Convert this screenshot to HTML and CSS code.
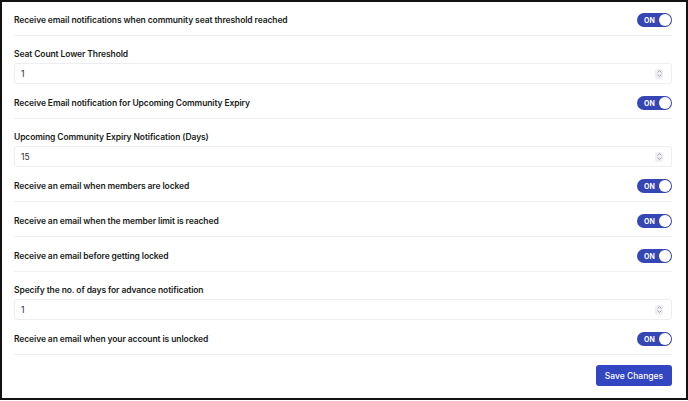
FILE: index.html
```html
<!DOCTYPE html>
<html>
<head>
<meta charset="utf-8">
<link rel="stylesheet" href="styles.css">
</head>
<body>
<div class="frame">
  <div class="settings">
    <div class="toggle-row first">
      <span class="label">Receive email notifications when community seat threshold reached</span>
      <span class="toggle"><span class="on">ON</span><span class="knob"></span></span>
    </div>
    <div class="field">
      <div class="label">Seat Count Lower Threshold</div>
      <div class="input"><span>1</span><span class="spin"><svg width="7" height="9" viewBox="0 0 7 9"><path d="M1.5 3.5 L3.5 1.5 L5.5 3.5 M1.5 5.5 L3.5 7.5 L5.5 5.5" fill="none" stroke="#8a8f98" stroke-width="0.8"/></svg></span></div>
    </div>
    <div class="toggle-row">
      <span class="label">Receive Email notification for Upcoming Community Expiry</span>
      <span class="toggle"><span class="on">ON</span><span class="knob"></span></span>
    </div>
    <div class="field">
      <div class="label">Upcoming Community Expiry Notification (Days)</div>
      <div class="input"><span>15</span><span class="spin"><svg width="7" height="9" viewBox="0 0 7 9"><path d="M1.5 3.5 L3.5 1.5 L5.5 3.5 M1.5 5.5 L3.5 7.5 L5.5 5.5" fill="none" stroke="#8a8f98" stroke-width="0.8"/></svg></span></div>
    </div>
    <div class="toggle-row">
      <span class="label">Receive an email when members are locked</span>
      <span class="toggle"><span class="on">ON</span><span class="knob"></span></span>
    </div>
    <div class="toggle-row">
      <span class="label">Receive an email when the member limit is reached</span>
      <span class="toggle"><span class="on">ON</span><span class="knob"></span></span>
    </div>
    <div class="toggle-row">
      <span class="label">Receive an email before getting locked</span>
      <span class="toggle"><span class="on">ON</span><span class="knob"></span></span>
    </div>
    <div class="field">
      <div class="label">Specify the no. of days for advance notification</div>
      <div class="input"><span>1</span><span class="spin"><svg width="7" height="9" viewBox="0 0 7 9"><path d="M1.5 3.5 L3.5 1.5 L5.5 3.5 M1.5 5.5 L3.5 7.5 L5.5 5.5" fill="none" stroke="#8a8f98" stroke-width="0.8"/></svg></span></div>
    </div>
    <div class="toggle-row">
      <span class="label">Receive an email when your account is unlocked</span>
      <span class="toggle"><span class="on">ON</span><span class="knob"></span></span>
    </div>
    <div class="actions">
      <button class="save">Save Changes</button>
    </div>
  </div>
</div>
</body>
</html>
```
FILE: styles.css
```css
* { box-sizing: border-box; }
html, body { margin: 0; padding: 0; background: #fff; }
body { font-family: Inter, "Noto Sans", sans-serif; color: #1f2328; }
.frame {
  width: 688px;
  height: 400px;
  border: 2px solid #111;
  background: #fff;
}
.settings {
  padding: 0 14px 0 12px;
  display: flex;
  flex-direction: column;
}
.label {
  font-size: 8.5px;
  font-weight: 600;
  line-height: 12px;
  letter-spacing: -0.1px;
  color: #1a1d21;
}
.toggle-row {
  display: flex;
  align-items: center;
  justify-content: space-between;
  padding: 12px 0 8px;
  border-bottom: 1px solid #eef0f2;
}
.toggle-row.first { padding-top: 11px; }
.toggle {
  width: 35px;
  height: 14px;
  border-radius: 7px;
  background: #3646b5;
  display: flex;
  align-items: center;
  justify-content: space-between;
  padding: 0 1px 0 7px;
}
.on {
  color: #fff;
  font-size: 7px;
  font-weight: 700;
  line-height: 1;
}
.knob {
  width: 12px;
  height: 12px;
  border-radius: 50%;
  background: #fff;
}
.field {
  padding-top: 12px;
  display: flex;
  flex-direction: column;
  gap: 3px;
}
.input {
  height: 21px;
  border: 1px solid #eceef1;
  border-radius: 3px;
  display: flex;
  align-items: center;
  justify-content: space-between;
  padding: 0 8px 0 6px;
  font-size: 8.5px;
  color: #2a2e33;
}
.spin {
  width: 8px;
  height: 10px;
  border-radius: 2px;
  background: #eef0f2;
  display: flex;
  align-items: center;
  justify-content: center;
}
.actions {
  display: flex;
  justify-content: flex-end;
  padding-top: 10px;
}
.save {
  width: 76px;
  height: 21px;
  border: none;
  border-radius: 3px;
  background: #3346c1;
  color: #fff;
  font-family: Inter, "Noto Sans", sans-serif;
  font-size: 8.5px;
  font-weight: 500;
  padding: 0;
}
```
